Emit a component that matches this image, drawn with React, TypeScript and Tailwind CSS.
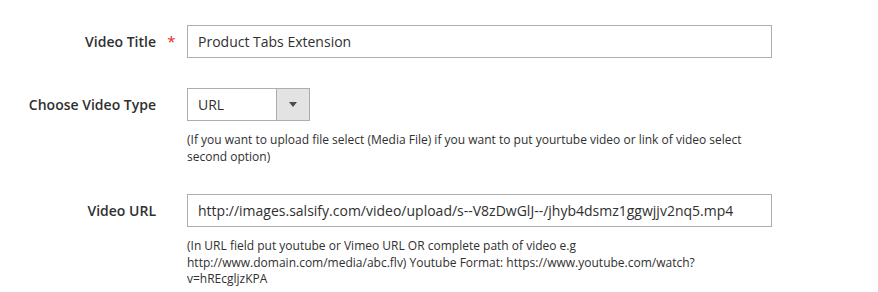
const font = { fontFamily: '"Open Sans", "Noto Sans", sans-serif' };

function Row({
  label,
  required,
  children,
}: {
  label: string;
  required?: boolean;
  children: React.ReactNode;
}) {
  return (
    <div className="grid grid-cols-[156px_31px_1fr]">
      <label className="flex h-[33px] items-center justify-end text-[14px] font-semibold text-[#303030]">
        {label}
      </label>
      <div className="flex h-[33px] items-center justify-center">
        {required && <span className="text-[15px] leading-none text-[#e22626]">*</span>}
      </div>
      <div>{children}</div>
    </div>
  );
}

function Note({ children }: { children: React.ReactNode }) {
  return (
    <p className="mt-[11px] w-[560px] text-[12px] leading-[16.5px] text-[#303030]">{children}</p>
  );
}

export default function App() {
  return (
    <div className="min-h-[292px] w-[878px] bg-white pt-[25px]" style={font}>
      <Row label="Video Title" required>
        <div className="flex h-[33px] w-[585px] items-center border border-[#adadad] bg-white px-[10px] text-[14px] text-[#303030]">
          Product Tabs Extension
        </div>
      </Row>

      <div className="mt-[30px]">
        <Row label="Choose Video Type">
          <div className="flex h-[33px] w-[123px] border border-[#adadad] bg-white text-[14px] text-[#303030]">
            <div className="flex flex-1 items-center px-[10px]">URL</div>
            <div className="flex w-[33px] items-center justify-center border-l border-[#adadad] bg-[#e3e3e3]">
              <svg width="8" height="5" viewBox="0 0 8 5">
                <path d="M0 0h8L4 5z" fill="#514943" />
              </svg>
            </div>
          </div>
          <Note>
            (If you want to upload file select (Media File) if you want to put yourtube video or link of
            video select second option)
          </Note>
        </Row>
      </div>

      <div className="mt-[29px]">
        <Row label="Video URL">
          <div className="flex h-[33px] w-[585px] items-center border border-[#adadad] bg-white px-[10px] text-[14px] text-[#303030]">
            http://images.salsify.com/video/upload/s--V8zDwGlJ--/jhyb4dsmz1ggwjjv2nq5.mp4
          </div>
          <Note>
            (In URL field put youtube or Vimeo URL OR complete path of video e.g
            http://www.domain.com/media/abc.flv) Youtube Format: https://www.youtube.com/watch?
            v=hREcgljzKPA
          </Note>
        </Row>
      </div>
    </div>
  );
}
